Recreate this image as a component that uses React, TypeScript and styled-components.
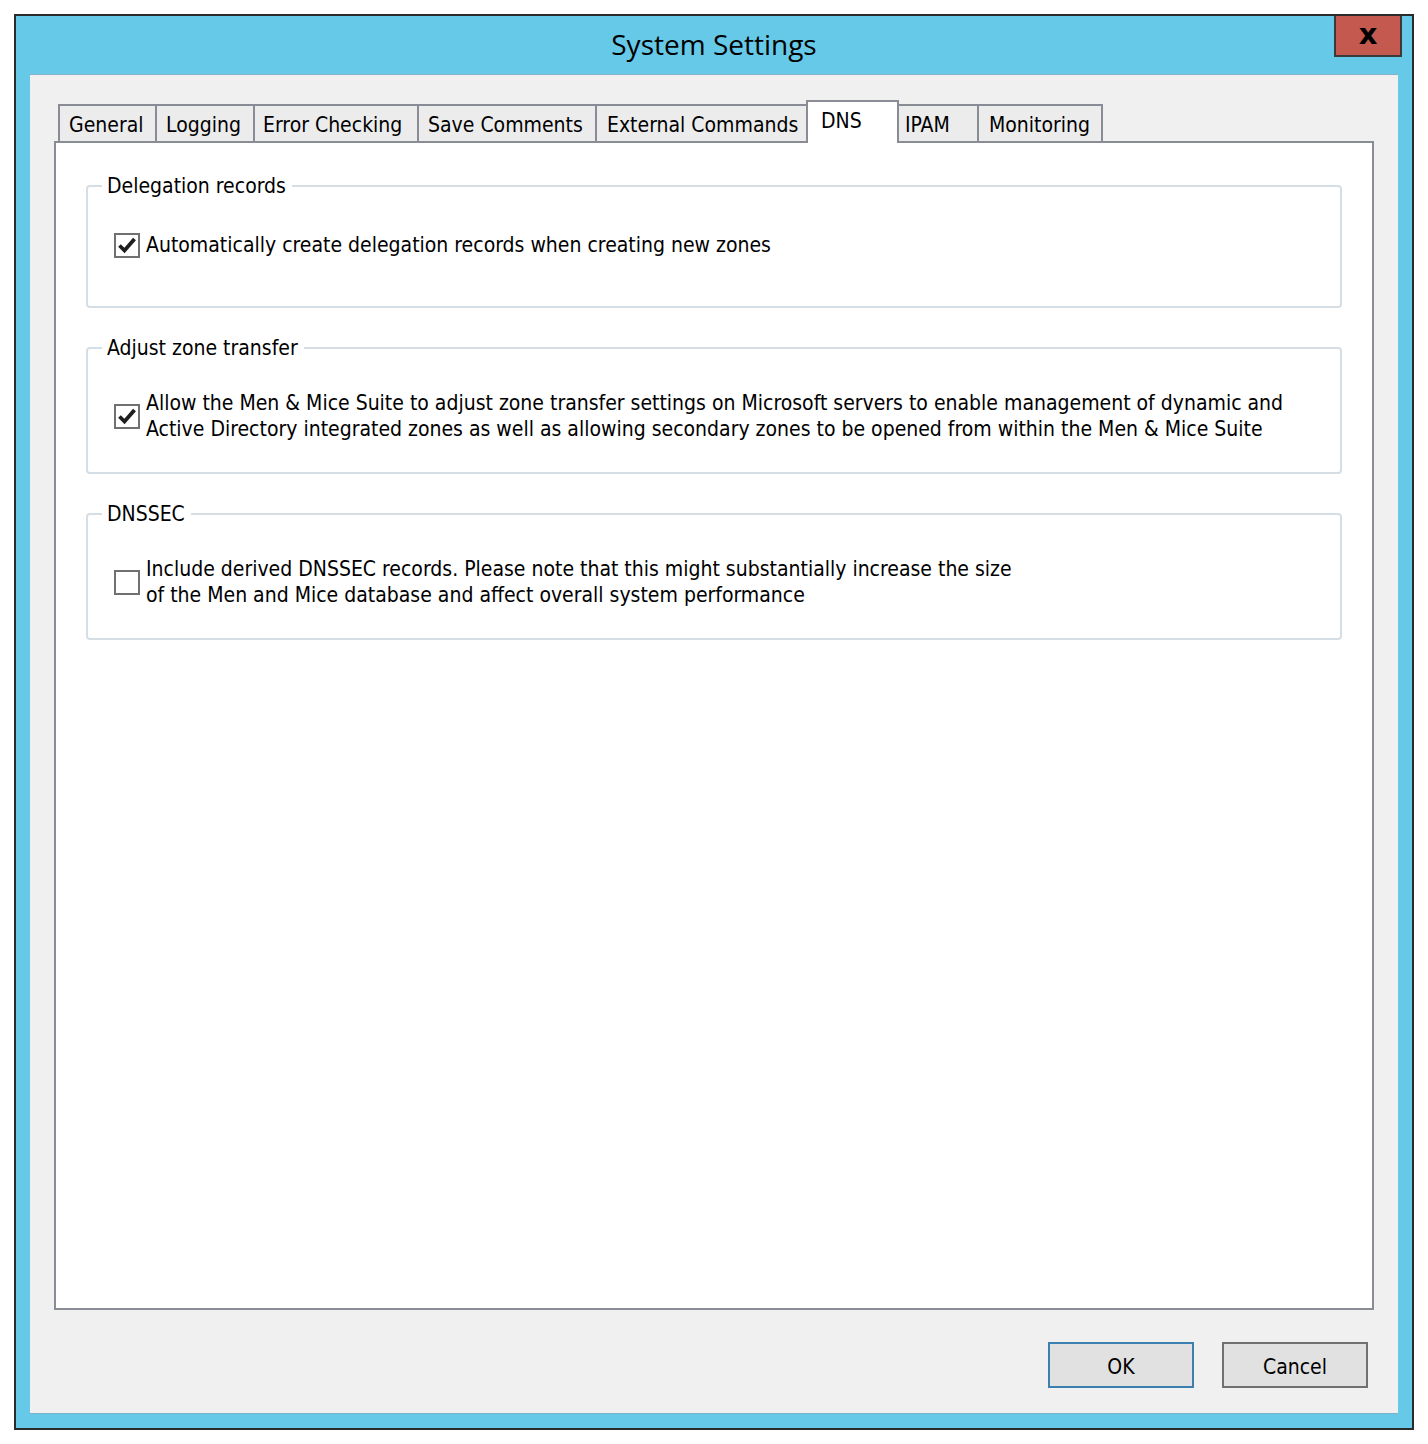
import React from "react";
import styled, { createGlobalStyle } from "styled-components";

const GlobalStyle = createGlobalStyle`
  html, body {
    margin: 0;
    padding: 0;
    background: #ffffff;
  }
  body {
    font-family: "DejaVu Sans Condensed", "DejaVu Sans", sans-serif;
  }
  * { box-sizing: border-box; }
`;

const UI_FONT = `"DejaVu Sans Condensed", "DejaVu Sans", sans-serif`;

const Window = styled.div`
  margin: 14px 0 0 14px;
  width: 1400px;
  height: 1416px;
  border: 2px solid #2b2b2b;
  background: #66c9e8;
  display: flex;
  flex-direction: column;
`;

const TitleBar = styled.div`
  height: 58px;
  flex-shrink: 0;
  display: grid;
  grid-template-columns: 1fr auto 1fr;
  align-items: center;
`;

const Title = styled.div`
  grid-column: 2;
  font-family: "Segoe UI", "Open Sans", "Noto Sans", sans-serif;
  font-size: 28px;
  color: #000;
  line-height: 1;
  padding-bottom: 2px;
`;

const CloseButton = styled.button`
  grid-column: 3;
  justify-self: end;
  align-self: start;
  margin-right: 10px;
  width: 68px;
  height: 41px;
  background: #c4594f;
  border: 2px solid #3a3a3a;
  border-top: none;
  padding: 0 0 3px 0;
  font-family: "DejaVu Sans", sans-serif;
  font-weight: bold;
  font-size: 29px;
  line-height: 1;
  color: #000;
  display: flex;
  align-items: center;
  justify-content: center;
`;

const Client = styled.div`
  flex: 1;
  margin: 0 14px 14px 14px;
  background: #f0f0f0;
  border-top: 1px solid #86b2c9;
  border-bottom: 1px solid #7fb0ca;
  padding: 25px 24px 0 24px;
  display: flex;
  flex-direction: column;
`;

const TabStrip = styled.div`
  height: 41px;
  padding-left: 4px;
  display: flex;
  align-items: flex-end;
`;

const Tab = styled.div<{ $w: number; $pl: number; $active?: boolean; $first?: boolean }>`
  width: ${(p) => p.$w}px;
  height: ${(p) => (p.$active ? 43 : 37)}px;
  margin-left: ${(p) => (p.$first ? 0 : -2)}px;
  margin-bottom: ${(p) => (p.$active ? -2 : 0)}px;
  position: relative;
  z-index: ${(p) => (p.$active ? 2 : 1)};
  background: ${(p) => (p.$active ? "#ffffff" : "#ececec")};
  border: 2px solid #898c94;
  border-bottom: none;
  padding: 6px 0 0 ${(p) => p.$pl}px;
  text-align: left;
  font-family: ${UI_FONT};
  font-size: 21px;
  line-height: 26px;
  color: #000;
  white-space: nowrap;
  overflow: hidden;
`;

const Panel = styled.div`
  height: 1169px;
  flex-shrink: 0;
  background: #ffffff;
  border: 2px solid #898c94;
  padding: 42px 30px 0 30px;
  display: flex;
  flex-direction: column;
  gap: 39px;
`;

const Group = styled.div<{ $h: number; $pt: number }>`
  position: relative;
  height: ${(p) => p.$h}px;
  border: 2px solid #d6dee5;
  border-radius: 4px;
  padding: ${(p) => p.$pt}px 20px 0 26px;
`;

const Legend = styled.span`
  position: absolute;
  top: -14px;
  left: 14px;
  padding: 0 6px 0 5px;
  background: #ffffff;
  font-family: ${UI_FONT};
  font-size: 21px;
  line-height: 26px;
  color: #000;
  white-space: nowrap;
`;

const CheckRow = styled.label`
  display: flex;
  align-items: center;
  gap: 6px;
`;

const CheckBox = styled.span`
  width: 26px;
  height: 25px;
  flex-shrink: 0;
  border: 2px solid #707070;
  background: #ffffff;
  display: flex;
  align-items: center;
  justify-content: center;
`;

const CheckText = styled.span`
  font-family: ${UI_FONT};
  font-size: 21px;
  line-height: 26px;
  color: #000;
  white-space: nowrap;
`;

const Footer = styled.div`
  display: flex;
  justify-content: flex-end;
  gap: 28px;
  padding: 32px 6px 0 0;
`;

const Button = styled.button<{ $default?: boolean }>`
  width: 146px;
  height: 46px;
  background: #e1e1e1;
  border: 2px solid ${(p) => (p.$default ? "#3c7fb1" : "#707070")};
  font-family: ${UI_FONT};
  font-size: 21px;
  line-height: 26px;
  color: #000;
  padding: 3px 0 0 0;
`;

const Check = ({ checked }: { checked: boolean }) => (
  <CheckBox>
    {checked && (
      <svg width="20" height="18" viewBox="0 0 20 18">
        <path
          d="M2.5 9.5 L7.5 14.5 L17.5 3"
          fill="none"
          stroke="#1e1e1e"
          strokeWidth="3.8"
          strokeLinecap="butt"
          strokeLinejoin="miter"
        />
      </svg>
    )}
  </CheckBox>
);

const tabs: { label: string; w: number; pl: number; active?: boolean }[] = [
  { label: "General", w: 99, pl: 9 },
  { label: "Logging", w: 100, pl: 9 },
  { label: "Error Checking", w: 166, pl: 8 },
  { label: "Save Comments", w: 180, pl: 9 },
  { label: "External Commands", w: 213, pl: 10 },
  { label: "DNS", w: 93, pl: 13, active: true },
  { label: "IPAM", w: 82, pl: 6 },
  { label: "Monitoring", w: 126, pl: 10 },
];

export default function App() {
  return (
    <>
      <GlobalStyle />
      <Window>
        <TitleBar>
          <Title>System Settings</Title>
          <CloseButton>x</CloseButton>
        </TitleBar>
        <Client>
          <TabStrip>
            {tabs.map((t, i) => (
              <Tab key={t.label} $w={t.w} $pl={t.pl} $active={t.active} $first={i === 0}>
                {t.label}
              </Tab>
            ))}
          </TabStrip>
          <Panel>
            <Group $h={123} $pt={45}>
              <Legend>Delegation records</Legend>
              <CheckRow>
                <Check checked />
                <CheckText>Automatically create delegation records when creating new zones</CheckText>
              </CheckRow>
            </Group>
            <Group $h={127} $pt={41}>
              <Legend>Adjust zone transfer</Legend>
              <CheckRow>
                <Check checked />
                <CheckText>
                  Allow the Men &amp; Mice Suite to adjust zone transfer settings on Microsoft servers to enable management of dynamic and
                  <br />
                  Active Directory integrated zones as well as allowing secondary zones to be opened from within the Men &amp; Mice Suite
                </CheckText>
              </CheckRow>
            </Group>
            <Group $h={127} $pt={41}>
              <Legend>DNSSEC</Legend>
              <CheckRow>
                <Check checked={false} />
                <CheckText>
                  Include derived DNSSEC records. Please note that this might substantially increase the size
                  <br />
                  of the Men and Mice database and affect overall system performance
                </CheckText>
              </CheckRow>
            </Group>
          </Panel>
          <Footer>
            <Button $default>OK</Button>
            <Button>Cancel</Button>
          </Footer>
        </Client>
      </Window>
    </>
  );
}
